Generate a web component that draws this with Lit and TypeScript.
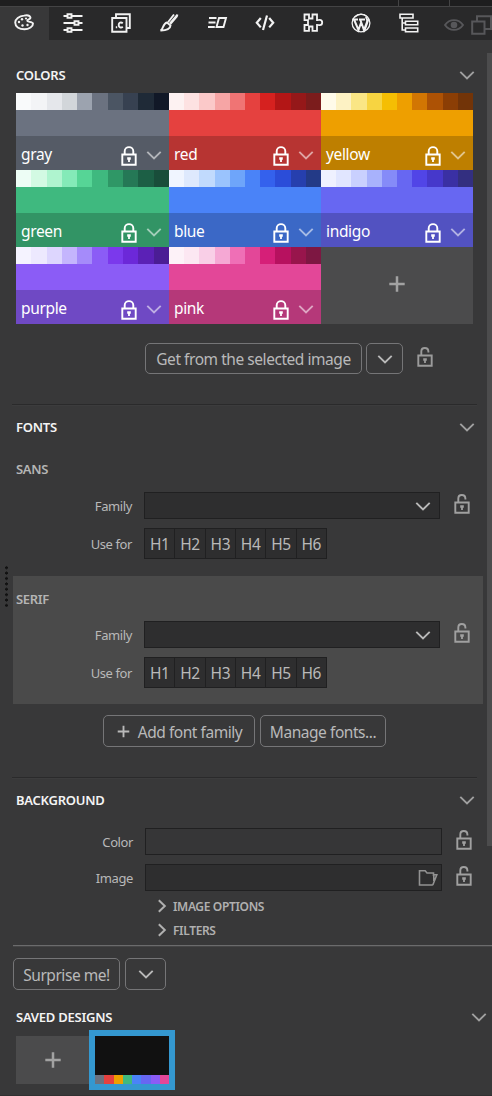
import { LitElement, html, svg, css } from "lit";
import { customElement, property } from "lit/decorators.js";

const ICONS: Record<string, any> = {
  palette: svg`<path d="M10 2.600C14 1.700 16 3 16.500 4.500C17 6.500 13 6.200 13.200 7.800C13.500 9.300 18.500 8.300 19 10.500C19.200 13.500 15 16.300 10.500 16.300C5 16.300 1.200 13.500 1.200 9.600C1.200 6 5 3 10 2.600Z" stroke-width="1.900"/><g fill="currentColor" stroke="none"><circle cx="5" cy="9" r="1.200"/><circle cx="8" cy="6.200" r="1.200"/><circle cx="12" cy="5.500" r="1.100"/><circle cx="8.500" cy="12.500" r="1.200"/><circle cx="13.500" cy="12" r="1.200"/></g>`,
  sliders: svg`<path d="M.5 3H4M9 3H19.500M.5 10H11M16 10H19.500M.5 17H4M9 17H19.500"/><path d="M4.500 1.300H8.500V4.700H4.500ZM11.500 8.300H15.500V11.700H11.500ZM4.500 15.300H8.500V18.700H4.500Z"/>`,
  classes: svg`<path d="M5 4.500V1.200H18.800V15H15.500M1.200 5H15.500V18.800H1.200Z"/><path d="M11.800 10.200C9.800 8.600 7.700 9.800 7.700 12C7.700 14.200 9.900 15.300 11.800 13.800M4.800 14.200H6.200" stroke-width="1.900"/>`,
  brush: svg`<path d="M18.500 1.500L11 10.300M15 1.500L9.200 9M18.500 1.500L17.800 3.500L11.500 11M8 9.500L11.500 12.500C11.500 15.500 8 17.600 1.500 17.500C4.500 16.500 3.500 10.500 8 9.500Z" stroke-width="1.900"/>`,
  fast: svg`<path d="M2 5H9.500M1.500 9.500H8.500M1 14H7.800M12 5H19L16.500 14H9.500Z" stroke-width="1.900"/>`,
  code: svg`<path d="M5.800 5L1.800 9.700L5.800 14.400M14.200 5L18.200 9.700L14.200 14.400M12 2.500L8 17" stroke-width="2.200"/>`,
  puzzle: svg`<path d="M1.500 1.500H6V5.500H9.500V1.500H14V7.200C15.500 7.200 15.300 6.800 16.800 6.800C20 6.800 20 12.200 16.800 12.200C15.300 12.200 15.500 11.800 14 11.800V17.800H9.500V13.500H6V17.800H1.500V12H5V7.200H1.500Z" stroke-width="1.800"/>`,
  wp: svg`<circle cx="10" cy="10" r="8.900" stroke-width="1.300"/><path d="M1.300 6.500H7M8 6.500H14M3 6.500L7.500 17L10.300 9M9.200 6.500L13 17L16 9C17 6.500 15 5.500 15.200 3.800" stroke-width="2"/><path d="M4 4C7 .8 12.500 .5 15.500 3.300M17.800 6L14 17" stroke-width="1.300"/>`,
  tree: svg`<path d="M1 1.200H14V5H1ZM6.500 8.200H18.700V11.700H6.500ZM6.500 15H18.700V18.700H6.500ZM3.200 5V17H6.500M3.200 10H6.500" stroke-width="1.600"/>`,
  eye: svg`<path d="M1 10C5.500 3.500 14.500 3.500 19 10C14.500 16.500 5.500 16.500 1 10Z"/><circle cx="10" cy="10" r="3.300" fill="currentColor" stroke="none"/>`,
  copy: svg`<path d="M6 6V1.200H20V14H14M1.200 6.500H13.500V18.800H1.200Z" stroke-width="2"/>`,
  chev: svg`<path d="M3.300 6.800L10 13.500L16.700 6.800" stroke-width="1.900"/>`,
  right: svg`<path d="M6.800 4.300L12.800 10L6.800 15.700" stroke-width="2"/>`,
  plus: svg`<path d="M10 2.300V17.700M2.300 10H17.700" stroke-width="2.500"/>`,
  lock: svg`<path d="M3.300 8.500H16.700V18.800H3.300ZM5.700 8.500V5.300C5.700-.3 14.300-.3 14.300 5.300V8.500" stroke-width="1.900"/><path d="M8.200 11.200H11.800V13.800H10.900V16H9.100V13.800H8.200Z" fill="currentColor" stroke="none"/>`,
  unlock: svg`<path d="M3.300 8.500H16.700V18.800H3.300ZM6.300 8.500V4.500C6.300-.2 13.300-.2 13.400 4.500V5.400" stroke-width="1.900"/><path d="M8.200 11.200H11.800V13.800H10.900V16H9.100V13.800H8.200Z" fill="currentColor" stroke="none"/>`,
  folder: svg`<path d="M14.800 17H1.500V2.800H7.200L9 5H15.500V8M14.800 17L18.800 6.800H15.800V13" stroke-width="1.600"/>`,
};

@customElement("ui-icon")
class UiIcon extends LitElement {
  @property() name = "chev";
  static styles = css`
    :host { display: block; flex: none; width: 20px; height: 20px; }
    svg { display: block; width: 100%; height: 100%; overflow: visible; fill: none; stroke: currentColor; stroke-width: 1.900; }
  `;
  render() {
    return html`<svg viewBox="0 0 20 20">${ICONS[this.name]}</svg>`;
  }
}

const COLORS: [string, string[]][] = [
  ["gray", ["#f9fafb", "#f3f4f6", "#e5e7eb", "#d2d6da", "#9ca3af", "#6b7280", "#4b5563", "#374151", "#1f2a37", "#111827"]],
  ["red", ["#fdf2f2", "#fde2e2", "#fbc9c9", "#f6a5a5", "#f07474", "#e5413f", "#d6211f", "#b31616", "#951819", "#7b1c1c"]],
  ["yellow", ["#fffbea", "#fdf2c4", "#fae685", "#f7d441", "#f5be03", "#ee9f00", "#d27603", "#ad5205", "#8b3e05", "#723408"]],
  ["green", ["#edfdf5", "#d3fae3", "#aff4cf", "#84eab8", "#56d596", "#3fb97f", "#2f9766", "#257856", "#1c5f45", "#194d3a"]],
  ["blue", ["#f0f5ff", "#dee9fd", "#c1dafd", "#9ac3fd", "#6ea5fa", "#4a83f8", "#3461ed", "#2b4dd9", "#263fae", "#233a87"]],
  ["indigo", ["#eff1ff", "#e1e6ff", "#c9d0fe", "#a8b2fc", "#858bf8", "#6767f2", "#5145e7", "#4638cb", "#3a30a4", "#332f80"]],
  ["purple", ["#f5f3ff", "#ede9fe", "#ddd6fe", "#c4b5fd", "#a58bfa", "#8b5cf6", "#7b39ec", "#6c28d9", "#5b21b6", "#4b1d95"]],
  ["pink", ["#fdf2f8", "#fce7f2", "#f9cfe7", "#f5a8d4", "#ef6fb6", "#e34798", "#d61f78", "#b7115f", "#98154c", "#7d1742"]],
];

@customElement("app-root")
class AppRoot extends LitElement {
  static styles = css`
    :host { display: block; position: relative; box-sizing: border-box; width: 492px; height: 1096px; overflow: hidden; background: #383839; color: #b9b9b9; font: 15.500px/20px "Noto Sans", sans-serif; letter-spacing: -0.450px; white-space: nowrap; }
    * { box-sizing: border-box; }
    .strip { height: 7px; background: #1e1e1f; border-bottom: 1px solid #444445; display: flex; padding-left: 398px; }
    .strip i { width: 52px; border: solid #444445; border-width: 0 1px; }
    .tabs { display: flex; height: 33px; background: #29292a; color: #f2f2f2; }
    .tab { width: 48px; flex: none; display: grid; place-items: center; padding: 0 1px 1px 0; }
    .tab.on { width: 49px; background: #383839; }
    .tab.dim { color: #57575a; padding-top: 3px; }
    .tab.dim.a { width: 41px; padding-right: 0; }
    .tab.dim.b { width: 20px; margin-left: -3px; justify-items: start; }
    .head { display: flex; align-items: center; justify-content: space-between; height: 20px; margin: 0 15px 0 16px; font-size: 13px; font-weight: 600; color: #f4f4f4; letter-spacing: -0.250px; }
    .head ui-icon { color: #a0a0a0; margin-top: -1px; }
    .head.saved { margin: 17px 3px 0 16px; }
    .grid { display: grid; grid-template-columns: 153px 152px 152px; grid-auto-rows: 77px; margin: 8px 0 0 16px; }
    .cell { display: flex; flex-direction: column; }
    .shades { height: 17px; display: flex; }
    .shades i { flex: 1; }
    .name { margin-top: 26px; height: 34px; background: rgba(0, 0, 0, 0.200); color: #fff; display: flex; align-items: center; padding: 0 5px; font-size: 15.500px; letter-spacing: -0.350px; }
    .name span { flex: 1; margin-top: 1px; }
    .name ui-icon { margin: 5px 5px 0 0; }
    .name ui-icon.c { opacity: .55; margin: 4px 0 0 0; }
    .add { background: #4b4b4c; display: grid; place-items: center; color: #a2a2a2; }
    .grid .add { padding-bottom: 3px; }
    .thumbs .add { padding-bottom: 1px; }
    .row { display: flex; }
    .btn { height: 32px; border: 1px solid #757577; border-radius: 5px; display: flex; align-items: center; justify-content: center; padding-top: 1px; }
    .btn > ui-icon { margin-top: -1px; }
    .from { margin: 19px 0 0 145px; height: 31px; align-items: center; }
    .from .btn { height: 31px; }
    .from ui-icon.l { margin: -4px 0 0 12px; color: #9b9b9b; }
    .rule { height: 2px; background: linear-gradient(#2a2a2b 50%, #3c3c3d 50%); margin: 0 15px 0 12px; }
    .sub { font-size: 13px; font-weight: 600; color: #b5b5b5; height: 20px; letter-spacing: -0.350px; }
    .sans { margin: 22px 9px 0 13px; height: 117px; padding-left: 3px; }
    .serif { margin: 0 9px 0 13px; height: 128px; background: #4a4a4a; padding: 13px 0 0 3px; }
    .field { display: flex; align-items: center; }
    .lab { width: 116px; margin-right: 12px; text-align: right; font-size: 13px; letter-spacing: -0.400px; flex: none; }
    .box { border: 1px solid #202021; background: #2e2e2f; width: 296px; height: 27px; display: flex; justify-content: flex-end; align-items: center; padding-right: 6px; }
    .field ui-icon.l { margin: -3px 0 0 11.500px; color: #a0a0a0; }
    .box ui-icon { margin-top: 1px; }
    .hs { display: flex; border: 1px solid #202021; background: #2e2e2f; width: 183px; height: 31px; font-size: 15.500px; letter-spacing: -0.400px; }
    .hs span { flex: 1; display: grid; place-items: center; padding-top: 1px; }
    .hs span + span { border-left: 1px solid #202021; }
    .bg .lab { width: 133px; }
    .bg .box { width: 297px; }
    .bg .flat { background: #363637; }
    .more { display: flex; align-items: center; height: 24px; margin-left: 152px; font-size: 12px; font-weight: 600; gap: 1px; letter-spacing: -0.350px; color: #b0b0b0; }
    .more span { padding-top: 1px; }
    .split { height: 2px; background: #6b6b6c; margin-left: 13px; border-bottom: 1px solid #454546; }
    .thumbs { display: flex; margin: 3px 0 0 16px; align-items: center; }
    .thumbs .add { width: 73px; height: 48px; }
    .pick { width: 86px; height: 60px; border: 6px solid #3498d0; background: #111; display: flex; align-items: flex-end; }
    .pick i { flex: 1; height: 9px; }
    .scroll { position: absolute; left: 487px; top: 53px; width: 5px; height: 793px; background: #4c4c4d; }
    .grip { position: absolute; left: 5px; top: 565px; width: 3px; height: 42px; background: radial-gradient(circle, #111 1.200px, transparent 1.700px) 0 0 / 3px 5.400px; }
    .foot { position: absolute; left: 0; right: 0; top: 1095px; height: 1px; background: #303031; }
  `;

  private family(name: string, lead: number) {
    return html`
      <div class="sub">${name}</div>
      <div class="field" style="margin-top:${lead}px">
        <span class="lab">Family</span>
        <div class="box"><ui-icon name="chev"></ui-icon></div>
        <ui-icon class="l" name="unlock"></ui-icon>
      </div>
      <div class="field" style="margin-top:9px">
        <span class="lab">Use for</span>
        <div class="hs">${[1, 2, 3, 4, 5, 6].map((n) => html`<span>H${n}</span>`)}</div>
      </div>`;
  }

  render() {
    return html`
      <div class="strip"><i></i></div>
      <div class="tabs">
        ${["palette", "sliders", "classes", "brush", "fast", "code", "puzzle", "wp", "tree"].map(
          (n, i) => html`<div class="tab ${i ? "" : "on"}"><ui-icon name=${n}></ui-icon></div>`
        )}
        <div class="tab dim a"><ui-icon name="eye"></ui-icon></div>
        <div class="tab dim b"><ui-icon name="copy"></ui-icon></div>
      </div>
      <div class="head" style="margin-top:25px">COLORS<ui-icon name="chev"></ui-icon></div>
      <div class="grid">
        ${COLORS.map(
          ([name, shades]) => html`<div class="cell" style="background:${shades[5]}">
            <div class="shades">${shades.map((c) => html`<i style="background:${c}"></i>`)}</div>
            <div class="name"><span>${name}</span><ui-icon name="lock"></ui-icon><ui-icon class="c" name="chev"></ui-icon></div>
          </div>`
        )}
        <div class="add"><ui-icon name="plus"></ui-icon></div>
      </div>
      <div class="row from">
        <div class="btn" style="width:217px">Get from the selected image</div>
        <div class="btn" style="width:37px;margin-left:4px"><ui-icon name="chev"></ui-icon></div>
        <ui-icon class="l" name="unlock"></ui-icon>
      </div>
      <div class="rule" style="margin-top:30px"></div>
      <div class="head" style="margin-top:11px">FONTS<ui-icon name="chev"></ui-icon></div>
      <div class="sans">${this.family("SANS", 13)}</div>
      <div class="serif">${this.family("SERIF", 12)}</div>
      <div class="row" style="margin:11px 0 0 103px;gap:5px">
        <div class="btn" style="width:152px;gap:7px"><ui-icon name="plus" style="width:15px;height:15px"></ui-icon>Add font family</div>
        <div class="btn" style="width:126px">Manage fonts...</div>
      </div>
      <div class="rule" style="margin-top:30px"></div>
      <div class="head" style="margin-top:11px">BACKGROUND<ui-icon name="chev"></ui-icon></div>
      <div class="bg">
        <div class="field" style="margin-top:18px">
          <span class="lab">Color</span><div class="box flat"></div><ui-icon class="l" name="unlock"></ui-icon>
        </div>
        <div class="field" style="margin-top:9px">
          <span class="lab">Image</span><div class="box" style="padding-right:3px;color:#929292"><ui-icon name="folder"></ui-icon></div><ui-icon class="l" name="unlock"></ui-icon>
        </div>
      </div>
      <div class="more" style="margin-top:3px"><ui-icon name="right"></ui-icon><span>IMAGE OPTIONS</span></div>
      <div class="more"><ui-icon name="right"></ui-icon><span>FILTERS</span></div>
      <div class="split" style="margin-top:3px"></div>
      <div class="row" style="margin:11px 0 0 13px;gap:5px">
        <div class="btn" style="width:107px">Surprise me!</div>
        <div class="btn" style="width:41px"><ui-icon name="chev"></ui-icon></div>
      </div>
      <div class="head saved">SAVED DESIGNS<ui-icon name="chev"></ui-icon></div>
      <div class="thumbs">
        <div class="add"><ui-icon name="plus"></ui-icon></div>
        <div class="pick">${COLORS.map(([, s]) => html`<i style="background:${s[5]}"></i>`)}</div>
      </div>
      <div class="scroll"></div>
      <div class="grip"></div>
      <div class="foot"></div>
    `;
  }
}
